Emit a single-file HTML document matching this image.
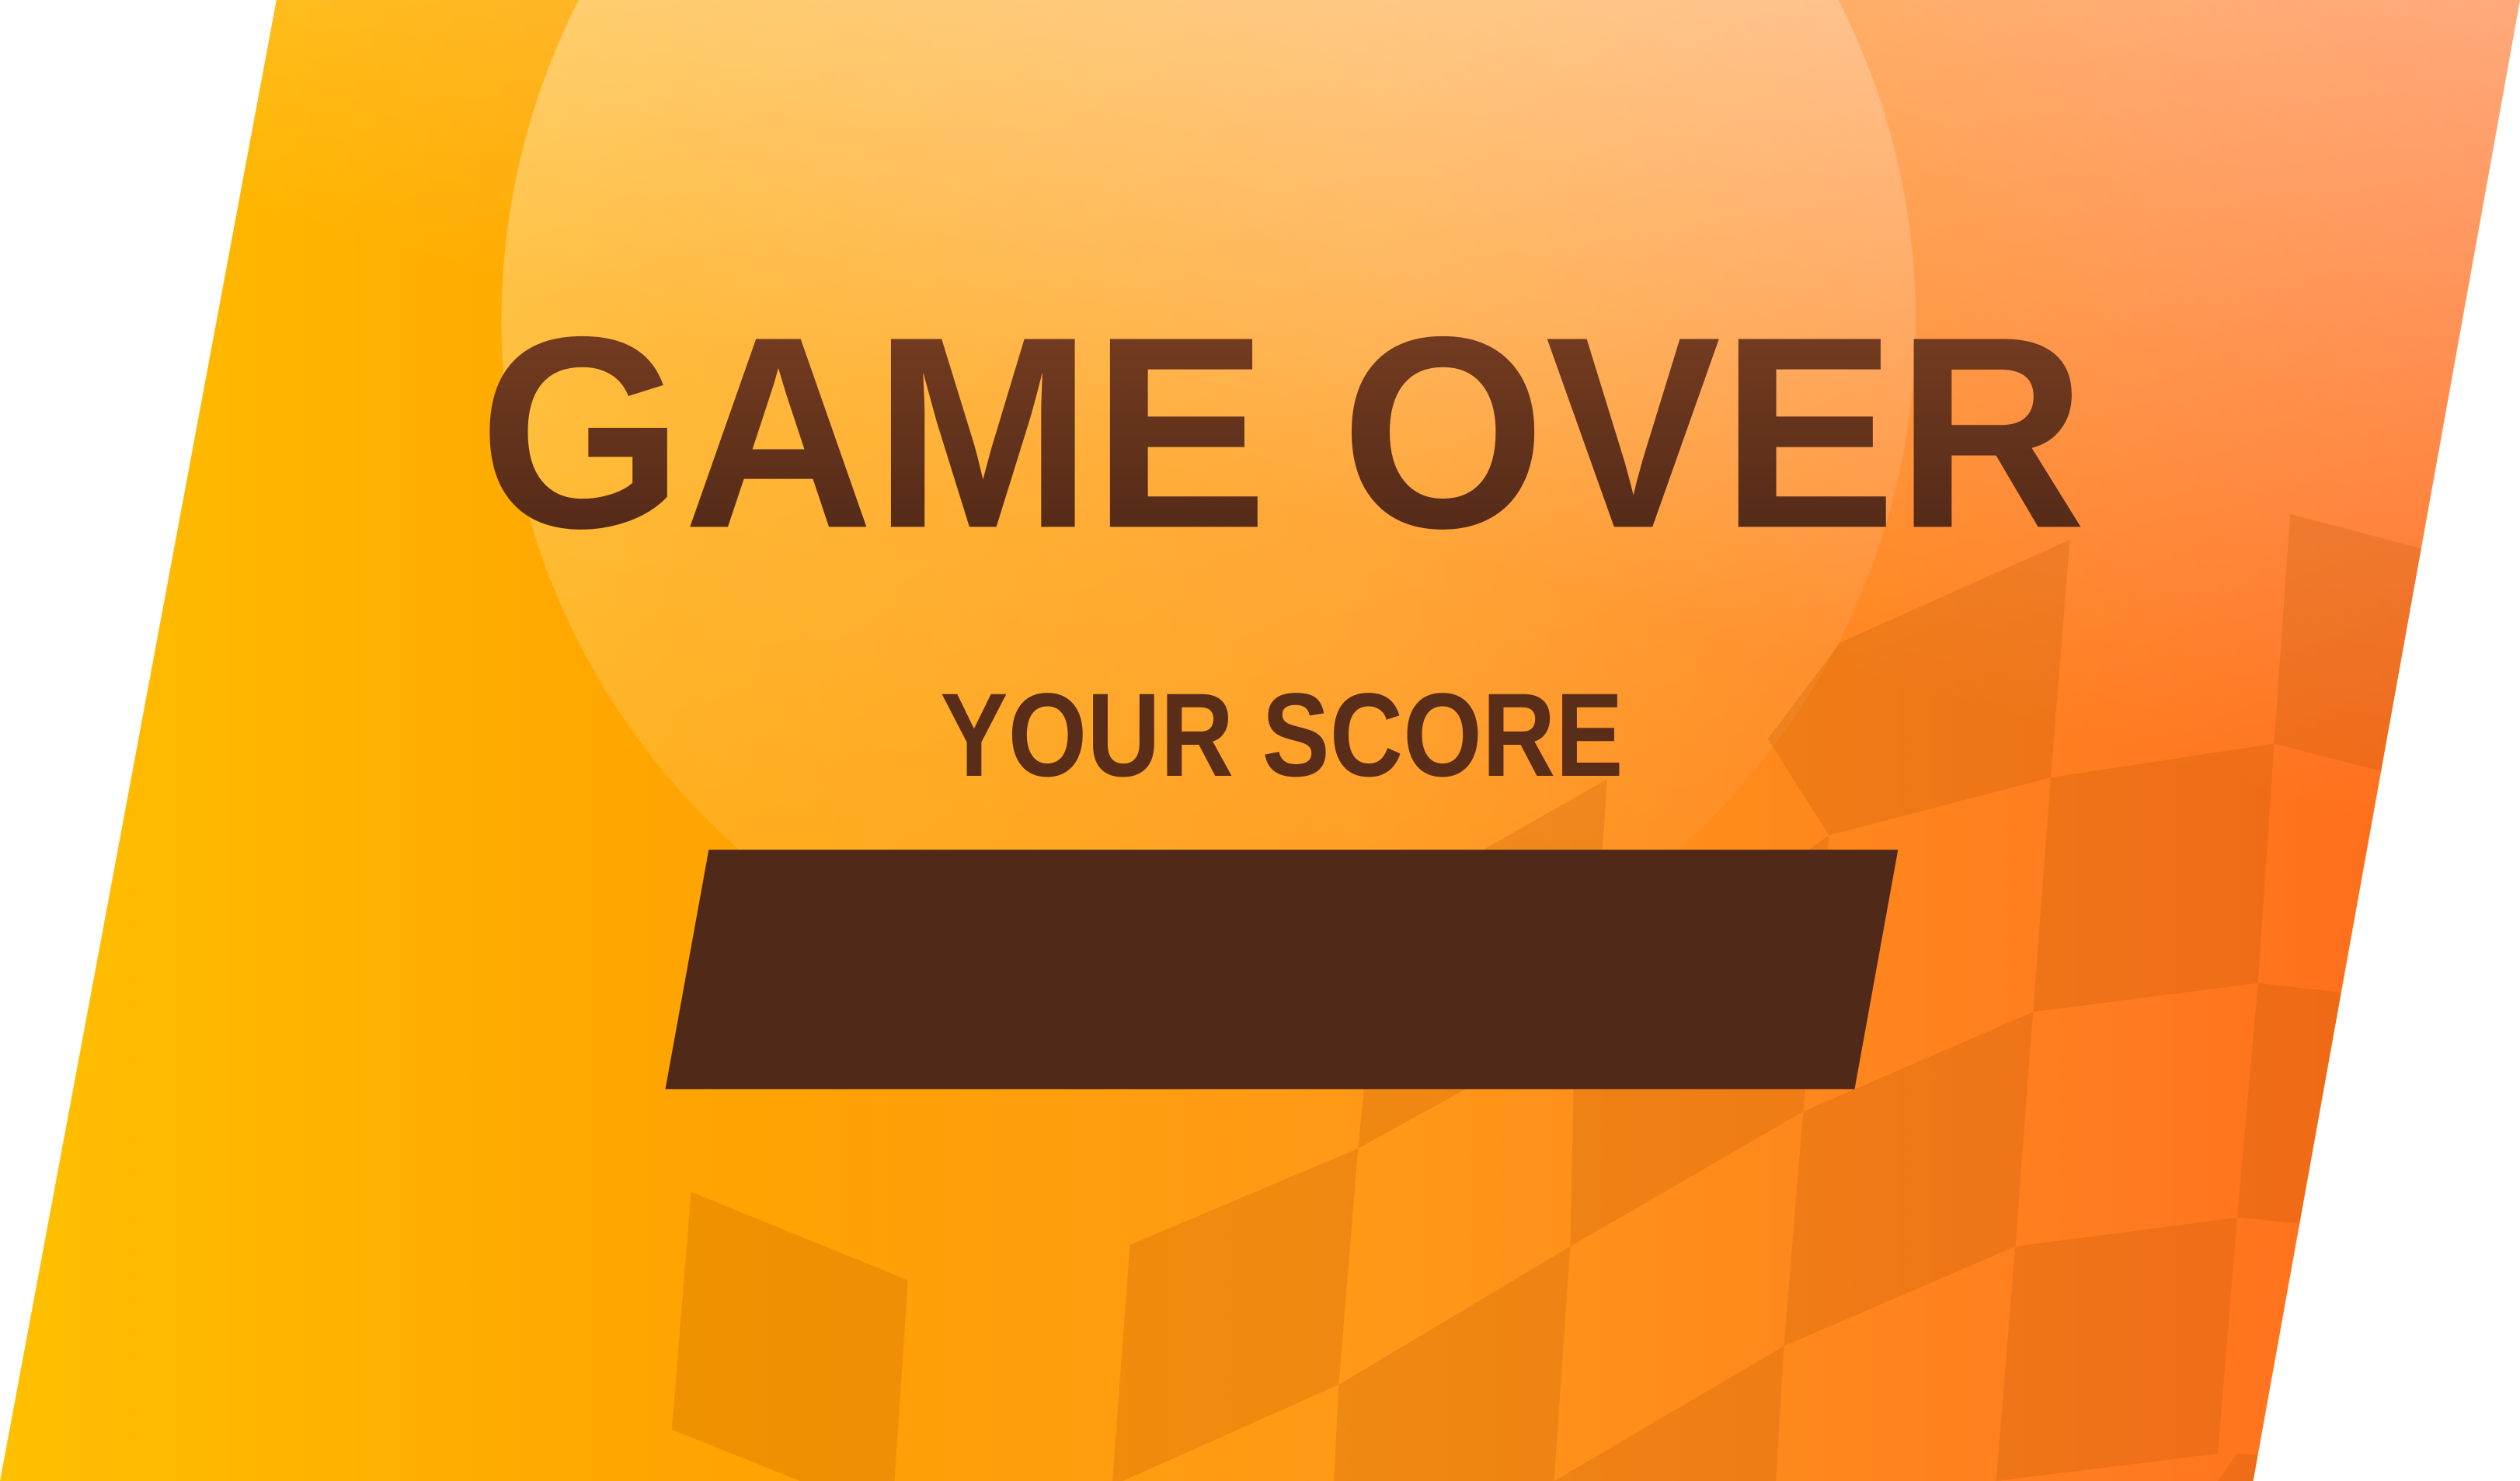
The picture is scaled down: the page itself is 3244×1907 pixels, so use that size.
<!DOCTYPE html>
<html><head><meta charset="utf-8"><style>
html,body{margin:0;padding:0;background:#fff;width:3244px;height:1907px;overflow:hidden}
svg{display:block;position:absolute;left:0;top:0}
</style></head><body>
<svg width="3244" height="1907" viewBox="0 0 1568 922" preserveAspectRatio="none" xmlns="http://www.w3.org/2000/svg">
<defs>
<clipPath id="pg"><polygon points="172,0 1568,0 1402,922 0,922"/></clipPath>
<linearGradient id="bg" x1="0" y1="0" x2="1" y2="0">
<stop offset="0" stop-color="#ffc000"/>
<stop offset="0.27" stop-color="#ffa400"/>
<stop offset="0.55" stop-color="#ff9818"/>
<stop offset="0.85" stop-color="#ff7a20"/>
<stop offset="1" stop-color="#ff6818"/>
</linearGradient>
<linearGradient id="top" gradientUnits="userSpaceOnUse" x1="1300" y1="-100" x2="1150" y2="420">
<stop offset="0" stop-color="#fff" stop-opacity="0.45"/>
<stop offset="1" stop-color="#fff" stop-opacity="0"/>
</linearGradient>
<linearGradient id="circ" x1="0.3" y1="0" x2="0.6" y2="1">
<stop offset="0" stop-color="#fff" stop-opacity="0.4"/>
<stop offset="1" stop-color="#fff" stop-opacity="0.02"/>
</linearGradient>
<linearGradient id="txt" x1="0" y1="0" x2="0" y2="1">
<stop offset="0" stop-color="#7c4022"/>
<stop offset="1" stop-color="#4c2616"/>
</linearGradient>
</defs>
<g clip-path="url(#pg)">
<rect x="0" y="0" width="1568" height="922" fill="url(#bg)"/>
<rect x="0" y="0" width="1568" height="922" fill="url(#top)"/>
<circle cx="752" cy="200" r="440" fill="url(#circ)"/>
<g fill="#b85000" fill-opacity="0.22">
<polygon points="1100,460 1145,400 1288,336 1276,484 1138,520"/>
<polygon points="1425,320 1520,345 1520,490 1415,463"/>
<polygon points="860,565 1000,485 990,635 845,715"/>
<polygon points="430,742 565,797 555,945 418,890"/>
<polygon points="703,775 845,715 833,862 692,925"/>
<polygon points="980,635 1138,520 1122,692 977,776"/>
<polygon points="1276,484 1415,463 1405,612 1265,630"/>
<polygon points="833,862 977,776 967,922 830,922"/>
<polygon points="1122,692 1265,630 1254,776 1110,838"/>
<polygon points="1405,612 1520,625 1520,770 1392,758"/>
<polygon points="967,922 1110,838 1105,922 967,922"/>
<polygon points="1254,776 1392,758 1380,905 1242,922"/>
<polygon points="1392,905 1520,910 1520,922 1380,922"/>
</g>
</g>
<text x="298" y="328" font-family="Liberation Sans, sans-serif" font-weight="bold" font-size="170" textLength="1000" lengthAdjust="spacingAndGlyphs" fill="url(#txt)">GAME OVER</text>
<text x="585" y="483" font-family="Liberation Sans, sans-serif" font-weight="bold" font-size="74" textLength="425" lengthAdjust="spacingAndGlyphs" fill="#5a2d18">YOUR SCORE</text>
<polygon points="441,529 1181,529 1154,678 414,678" fill="#502918"/>
</svg>
</body></html>
